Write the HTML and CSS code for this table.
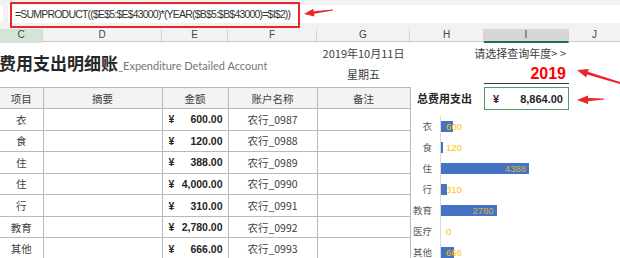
FILE: index.html
```html
<!DOCTYPE html>
<html lang="zh-CN">
<head>
<meta charset="utf-8">
<title>费用支出明细账</title>
<link rel="stylesheet" href="styles.css">
</head>
<body>
<div class="app">
  <div class="fbar">
    <div class="namebox"></div>
    <div class="finput"><span class="formula">=SUMPRODUCT(($E$5:$E$43000)*(YEAR($B$5:$B$43000)=$I$2))</span></div>
  </div>
  <div class="colheads">
    <div class="ch ch-sel">C</div>
    <div class="ch">D</div>
    <div class="ch">E</div>
    <div class="ch">F</div>
    <div class="ch">G</div>
    <div class="ch">H</div>
    <div class="ch ch-act">I</div>
    <div class="ch ch-last">J</div>
  </div>
  <div class="sheet">
    <div class="title">费用支出明细账<span class="sub">_Expenditure Detailed Account</span></div>
    <div class="date">2019年10月11日</div>
    <div class="prompt">请选择查询年度&gt; &gt;</div>
    <div class="week">星期五</div>
    <div class="year">2019</div>

    <table class="ledger">
      <colgroup>
        <col class="c-item"><col class="c-desc"><col class="c-amt"><col class="c-acct"><col class="c-note">
      </colgroup>
      <thead>
        <tr><th>项目</th><th>摘要</th><th>金额</th><th>账户名称</th><th>备注</th></tr>
      </thead>
      <tbody>
        <tr><td>衣</td><td></td><td><div class="amt"><span>¥</span><span>600.00</span></div></td><td class="acct">农行_0987</td><td></td></tr>
        <tr><td>食</td><td></td><td><div class="amt"><span>¥</span><span>120.00</span></div></td><td class="acct">农行_0988</td><td></td></tr>
        <tr><td>住</td><td></td><td><div class="amt"><span>¥</span><span>388.00</span></div></td><td class="acct">农行_0989</td><td></td></tr>
        <tr><td>住</td><td></td><td><div class="amt"><span>¥</span><span>4,000.00</span></div></td><td class="acct">农行_0990</td><td></td></tr>
        <tr><td>行</td><td></td><td><div class="amt"><span>¥</span><span>310.00</span></div></td><td class="acct">农行_0991</td><td></td></tr>
        <tr><td>教育</td><td></td><td><div class="amt"><span>¥</span><span>2,780.00</span></div></td><td class="acct">农行_0992</td><td></td></tr>
        <tr><td>其他</td><td></td><td><div class="amt"><span>¥</span><span>666.00</span></div></td><td class="acct">农行_0993</td><td></td></tr>
      </tbody>
    </table>

    <div class="total-label">总费用支出</div>
    <div class="total-box"><span>¥</span><span>8,864.00</span></div>

    <div class="chart">
      <div class="crow"><span class="clabel">衣</span><div class="track"><div class="bar" style="width:12px"></div><span class="val">600</span></div></div>
      <div class="crow"><span class="clabel">食</span><div class="track"><div class="bar" style="width:2.4px"></div><span class="val">120</span></div></div>
      <div class="crow"><span class="clabel">住</span><div class="track"><div class="bar bar-in" style="width:88px"><span class="val">4388</span></div></div></div>
      <div class="crow"><span class="clabel">行</span><div class="track"><div class="bar" style="width:6.2px"></div><span class="val">310</span></div></div>
      <div class="crow"><span class="clabel">教育</span><div class="track"><div class="bar bar-in" style="width:55.6px"><span class="val">2780</span></div></div></div>
      <div class="crow"><span class="clabel">医疗</span><div class="track"><div class="bar" style="width:0px"></div><span class="val">0</span></div></div>
      <div class="crow"><span class="clabel">其他</span><div class="track"><div class="bar" style="width:13.3px"></div><span class="val">666</span></div></div>
    </div>
  </div>

  <div class="redbox"></div>
  <svg class="arrows" width="620" height="258" viewBox="0 0 620 258">
    <polygon points="304,14 314.4,16.4 314.1,13.8 333.1,10.6 332.9,9.4 313.7,11.3 313.2,8.8"/>
    <polygon points="577,70 586.3,77.4 587.1,74.6 619.8,83.9 620.3,82.1 587.9,71.8 588.9,69.0"/>
    <polygon points="577,100 588.1,104 588,101.3 604,99.6 604,98.4 588,98.1 587.9,95.4"/>
  </svg>
</div>
</body>
</html>
```

FILE: styles.css
```css
* { box-sizing: border-box; }
html, body { margin: 0; padding: 0; background: #fff; }
body {
  width: 620px;
  height: 258px;
  overflow: hidden;
  font-family: "Noto Sans CJK SC", "Liberation Sans", sans-serif;
  color: #404040;
}
.app { position: relative; width: 620px; height: 258px; overflow: hidden; }

/* formula bar */
.fbar {
  height: 29px;
  background: #f1f1f1;
  display: flex;
  align-items: center;
  padding-bottom: 1px;
  gap: 5px;
}
.namebox { width: 3px; height: 18px; background: #fff; }
.finput {
  flex: 1;
  height: 18px;
  background: #fff;
  display: flex;
  align-items: center;
  padding-left: 7px;
}
.formula {
  font-family: "Liberation Sans", sans-serif;
  font-size: 10.5px;
  letter-spacing: -0.8px;
  color: #333;
}
.redbox {
  position: absolute;
  left: 10px; top: 2px;
  width: 290px; height: 26px;
  border: 2px solid #e8262b;
  border-radius: 1px;
}
.arrows { position: absolute; left: 0; top: 0; fill: #e8262b; pointer-events: none; }

/* column headers */
.colheads {
  display: grid;
  grid-template-columns: 43px 119px 66px 89px 93px 74px 85px 51px;
  height: 13px;
  background: #f3f3f3;
  border-bottom: 1px solid #c9c9c9;
}
.ch {
  font-family: "Liberation Sans", sans-serif;
  font-size: 10px;
  line-height: 12px;
  color: #444;
  text-align: center;
  border-right: 1px solid #d4d4d4;
}
.ch-sel { background: #d2e5d6; }
.ch-act { background: #d6d6d6; border-bottom: 2px solid #217346; }
.ch-last { border-right: 0; }

/* sheet */
.sheet {
  display: grid;
  grid-template-columns: 43px 119px 66px 89px 93px 74px 85px 51px;
  grid-template-rows: 22px 23px 21px repeat(7, 21.57px);
}
.title {
  grid-column: 1 / 5;
  grid-row: 1 / 3;
  align-self: center;
  margin-left: -1px;
  font-size: 17px;
  font-weight: 700;
  color: #262626;
  white-space: nowrap;
  line-height: 24px;
}
.sub {
  font-family: "Lato", "Liberation Sans", sans-serif;
  font-size: 11px;
  font-weight: 400;
  color: #767676;
}
.date, .week {
  grid-column: 5;
  text-align: center;
  font-size: 11px;
  color: #404040;
}
.date { grid-row: 1; align-self: center; }
.week { grid-row: 2; align-self: center; padding-bottom: 4px; }
.prompt {
  grid-column: 6 / 8;
  grid-row: 1;
  align-self: center;
  text-align: right;
  padding-right: 3px;
  font-size: 11px;
  color: #404040;
}
.year {
  grid-column: 7;
  grid-row: 2;
  text-align: right;
  padding-right: 3px;
  font-family: "Liberation Sans", sans-serif;
  font-size: 16px;
  font-weight: 700;
  color: #ff0000;
  border-bottom: 1px solid #3a3a3a;
  margin-bottom: 3px;
  line-height: 19px;
  align-self: end;
}

/* ledger table */
.ledger {
  grid-column: 1 / 6;
  grid-row: 3 / 11;
  border-collapse: collapse;
  table-layout: fixed;
  width: 410px;
  font-size: 10.5px;
}
.c-item { width: 43px; }
.c-desc { width: 119px; }
.c-amt { width: 66px; }
.c-acct { width: 89px; }
.c-note { width: 93px; }
.ledger th, .ledger td {
  border: 1px solid #b9b9b9;
  padding: 0;
  text-align: center;
  font-weight: 400;
  color: #404040;
  white-space: nowrap;
}
.ledger tr > :first-child { border-left: 0; }
.ledger th { height: 21px; background: #f2f2f2; }
.ledger td { height: 21.57px; }
.acct { color: #595959; }
.amt {
  display: flex;
  justify-content: space-between;
  padding: 0 5px 0 6px;
  font-family: "Liberation Sans", sans-serif;
  font-weight: 700;
  font-size: 10.5px;
  color: #262626;
}

/* total */
.total-label {
  grid-column: 6;
  grid-row: 3;
  align-self: center;
  text-align: right;
  padding-right: 12px;
  font-size: 11px;
  font-weight: 700;
  color: #262626;
}
.total-box {
  grid-column: 7;
  grid-row: 3;
  height: 23px;
  border: 1px solid #4f9a68;
  display: flex;
  align-items: center;
  justify-content: space-between;
  padding: 0 5px 0 8px;
  font-family: "Liberation Sans", sans-serif;
  font-size: 11px;
  font-weight: 700;
  color: #262626;
}

/* chart */
.chart {
  grid-column: 6 / 9;
  grid-row: 4 / 11;
  padding-top: 8px;
  display: flex;
  flex-direction: column;
}
.crow {
  display: flex;
  align-items: stretch;
  height: 21px;
  flex: none;
}
.clabel {
  width: 22px;
  margin-right: 8px;
  text-align: right;
  font-size: 9.5px;
  line-height: 21px;
  color: #595959;
}
.track {
  flex: 1;
  border-left: 1px solid #d9d9d9;
  display: grid;
  align-items: center;
  justify-items: start;
}
.track > * { grid-area: 1 / 1; }
.bar {
  height: 11px;
  background: #4472c4;
  display: flex;
  align-items: center;
  justify-content: flex-end;
}
.val {
  font-family: "Liberation Sans", sans-serif;
  font-size: 9.5px;
  color: #ffc000;
  margin-left: 5px;
  line-height: 11px;
}
.bar-in .val { margin-left: 0; margin-right: 3px; color: #d8b43a; }
```
